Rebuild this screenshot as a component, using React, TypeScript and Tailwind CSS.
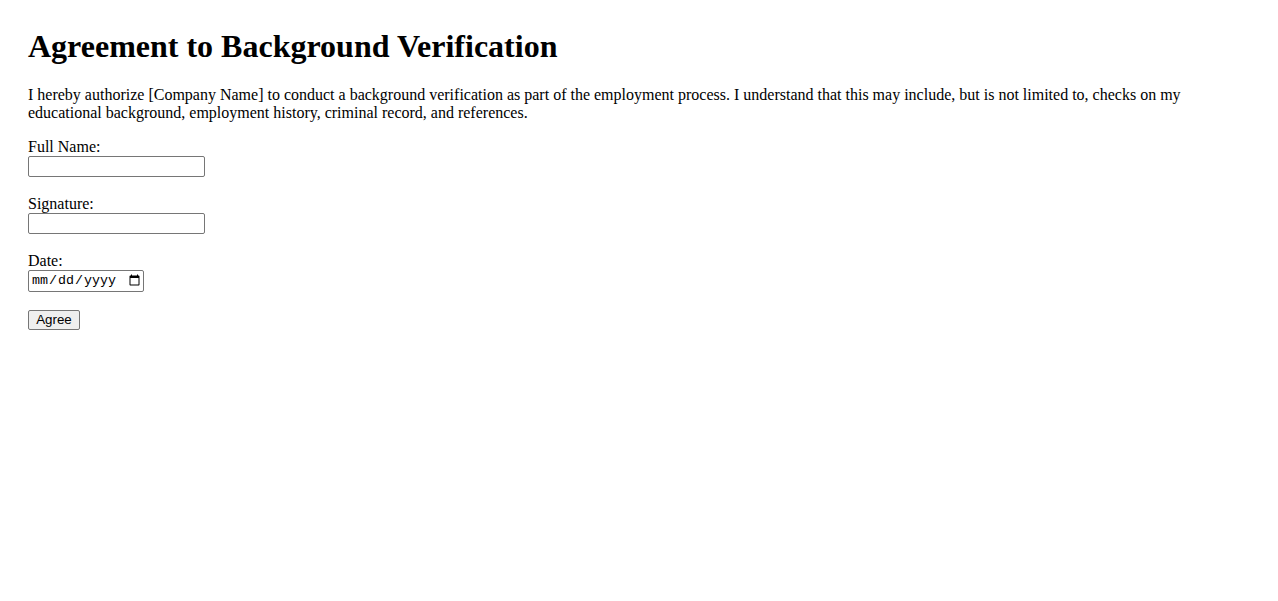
export default function App() {
  return (
    <div className="min-h-screen bg-white px-[28px] pt-[28px] text-black" style={{ fontFamily: '"Liberation Serif", "Times New Roman", serif' }}>
      <h1 className="mb-[21px] text-[32px] font-bold leading-[37px]">Agreement to Background Verification</h1>
      <p className="mb-4 text-[16px] leading-[18px]">
        I hereby authorize [Company Name] to conduct a background verification as part of the employment process. I understand that this may include, but is not limited to, checks on my educational background, employment history, criminal record, and references.
      </p>
      <form className="flex flex-col items-start text-[16px] leading-[18px]" onSubmit={(e) => e.preventDefault()}>
        <label htmlFor="fullName">Full Name:</label>
        <input
          id="fullName"
          type="text"
          className="mb-[18px] h-[21px] w-[177px] rounded-[2px] border border-[#767676] bg-white px-[2px] text-[13.33px]"
        />
        <label htmlFor="signature">Signature:</label>
        <input
          id="signature"
          type="text"
          className="mb-[18px] h-[21px] w-[177px] rounded-[2px] border border-[#767676] bg-white px-[2px] text-[13.33px]"
        />
        <label htmlFor="date">Date:</label>
        <input
          id="date"
          type="date"
          className="mb-[18px] h-[22px] w-[116px] rounded-[2px] border border-[#767676] bg-white pl-[2px] text-[13.33px] leading-[18px]"
          style={{ fontFamily: '"Liberation Mono", monospace' }}
        />
        <button
          type="submit"
          className="h-[20px] w-[52px] rounded-[2px] border border-[#767676] bg-[#efefef] text-[13.33px] leading-[16px]"
          style={{ fontFamily: '"Liberation Sans", Arial, sans-serif' }}
        >
          Agree
        </button>
      </form>
    </div>
  )
}
